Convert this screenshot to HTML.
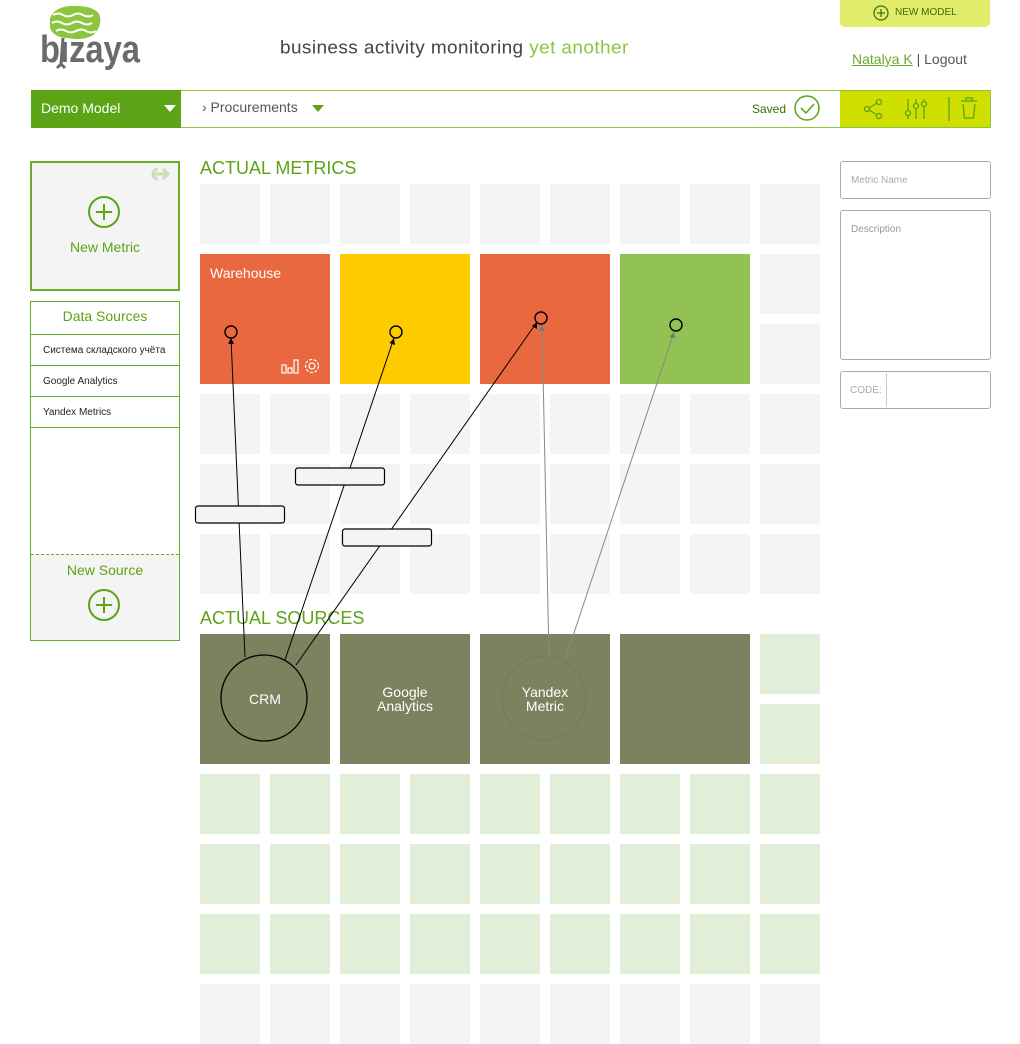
<!DOCTYPE html>
<html><head><meta charset="utf-8"><style>
*{margin:0;padding:0;box-sizing:border-box}
body{width:1020px;height:1020px;overflow:hidden;background:#fff;font-family:"Liberation Sans",sans-serif;position:relative}
.a{position:absolute}
.g{position:absolute;width:60px;height:60px;background:#f4f4f4}
.l{position:absolute;width:60px;height:60px;background:#e1efd9}
.big{position:absolute;width:130px;height:130px}
.src{position:absolute;width:130px;height:130px;background:#7d8160;color:#fff;font-size:14px;line-height:14px;text-align:center;display:flex;align-items:center;justify-content:center}
.h{position:absolute;color:#5ca316;font-size:18px}
.ds{position:absolute;left:31px;width:148px;border-bottom:1px solid #6aab2a;font-size:10px;color:#222;padding-left:12px}
</style></head><body>
<!-- logo -->
<svg class="a" style="left:38px;top:4px" width="106" height="66" viewBox="0 0 106 66">
<path d="M12 14 Q18 1 38 2 Q58 2 62 12 Q64 24 54 32 Q42 37 30 34 Q16 34 12 24 Z" fill="#8cc63f"/>
<path d="M15 11 q5 -3 10 0 t10 0 t10 0 t10 0 M14 19 q5 -3 10 0 t10 0 t10 0 t10 0 M18 27 q5 -3 10 0 t10 0 t10 0 t10 0" stroke="#fff" stroke-width="2" fill="none"/>
<path d="M25 34 L23 60 M23 60 l-4 4 M23 60 l4 4" stroke="#6b6b6b" stroke-width="3" fill="none"/>
<text x="2" y="58" font-family="Liberation Sans" font-weight="bold" font-size="38" fill="#6b6b6b" textLength="100" lengthAdjust="spacingAndGlyphs">bızaya</text>
</svg>
<div class="a" style="left:280px;top:38px;font-size:19px;color:#444;letter-spacing:0.4px;font-weight:300;transform:scaleY(0.95)">business activity monitoring <span style="color:#8cc63f">yet another</span></div>
<div class="a" style="left:840px;top:0;width:150px;height:27px;background:#e0ec6a;border-radius:0 0 5px 5px;font-size:10px;color:#3d6b10;line-height:26px;">
<svg class="a" style="left:33px;top:5px" width="16" height="16"><circle cx="8" cy="8" r="7" fill="none" stroke="#3d6b10" stroke-width="1.2"/><path d="M8 4v8M4 8h8" stroke="#3d6b10" stroke-width="1.2"/></svg><span style="margin-left:55px">NEW MODEL</span></div>
<div class="a" style="left:852px;top:51px;font-size:14px;color:#555"><span style="color:#6aab2a;text-decoration:underline">Natalya K</span> | Logout</div>
<!-- bar -->
<div class="a" style="left:31px;top:90px;width:960px;height:38px;border:1px solid #8cc63f"></div>
<div class="a" style="left:31px;top:90px;width:150px;height:38px;background:#5ca316;color:#fff;font-size:14px;line-height:36px;padding-left:10px">Demo Model
<span class="a" style="left:133px;top:15px;border:6px solid transparent;border-top:7px solid #fff;border-bottom:0"></span></div>
<div class="a" style="left:202px;top:99px;font-size:14px;color:#555">› Procurements</div>
<span class="a" style="left:312px;top:105px;border:6px solid transparent;border-top:7px solid #5ca316;border-bottom:0"></span>
<div class="a" style="left:752px;top:102px;font-size:12px;color:#3d6b10">Saved</div>
<svg class="a" style="left:794px;top:95px" width="28" height="28"><circle cx="13" cy="13" r="12" fill="none" stroke="#5ca316" stroke-width="1.5"/><path d="M7 13l5 5 8-9" stroke="#5ca316" stroke-width="1.5" fill="none"/></svg>
<div class="a" style="left:840px;top:91px;width:150px;height:36px;background:#cfdf00"></div>
<svg class="a" style="left:840px;top:91px" width="150" height="36">
<g stroke="#5ca316" stroke-width="1.3" fill="none">
<circle cx="27" cy="18" r="2.5"/><circle cx="39" cy="11" r="2.5"/><circle cx="39" cy="25" r="2.5"/><path d="M29 17l8-5M29 19l8 5"/>
<path d="M68 8v20M76 8v20M84 8v20"/><circle cx="68" cy="22" r="2.5" fill="#cfdf00"/><circle cx="76" cy="15" r="2.5" fill="#cfdf00"/><circle cx="84" cy="13" r="2.5" fill="#cfdf00"/>
<path d="M109 6v24"/><path d="M121 10h16M126 10v-3h6v3M123 13l1.5 14h9l1.5-14"/>
</g></svg>
<!-- left panel -->
<div class="a" style="left:30px;top:161px;width:150px;height:130px;background:#f4f4f4;border:2px solid #6aab2a"></div>
<svg class="a" style="left:150px;top:166px" width="24" height="16"><path d="M3 8h14M13 3l5 5-5 5M8 3a5 5 0 0 0 0 10" stroke="#c8dfbb" stroke-width="3" fill="none"/></svg>
<svg class="a" style="left:88px;top:196px" width="34" height="34"><circle cx="16" cy="16" r="15" fill="none" stroke="#5ca316" stroke-width="2"/><path d="M16 8v16M8 16h16" stroke="#5ca316" stroke-width="2"/></svg>
<div class="a" style="left:30px;top:239px;width:150px;text-align:center;color:#5ca316;font-size:14px">New Metric</div>
<div class="a" style="left:30px;top:301px;width:150px;height:340px;border:1px solid #6aab2a"></div>
<div class="a" style="left:31px;top:302px;width:148px;height:33px;border-bottom:1px solid #6aab2a;text-align:center;color:#5ca316;font-size:14px;line-height:28px">Data Sources</div>
<div class="ds" style="top:335px;height:31px;line-height:31px">Система складского учёта</div>
<div class="ds" style="top:366px;height:31px;line-height:32px">Google Analytics</div>
<div class="ds" style="top:397px;height:31px;line-height:31px">Yandex Metrics</div>
<div class="a" style="left:31px;top:554px;width:148px;height:86px;background:#f4f4f4;border-top:1px dashed #6aab2a"></div>
<div class="a" style="left:30px;top:562px;width:150px;text-align:center;color:#5ca316;font-size:14px">New Source</div>
<svg class="a" style="left:88px;top:589px" width="34" height="34"><circle cx="16" cy="16" r="15" fill="none" stroke="#5ca316" stroke-width="2"/><path d="M16 8v16M8 16h16" stroke="#5ca316" stroke-width="2"/></svg>
<!-- headers -->
<div class="h" style="left:200px;top:158px">ACTUAL METRICS</div>
<!-- gray tiles -->
<div class="g" style="left:200px;top:184px"></div><div class="g" style="left:270px;top:184px"></div><div class="g" style="left:340px;top:184px"></div><div class="g" style="left:410px;top:184px"></div><div class="g" style="left:480px;top:184px"></div><div class="g" style="left:550px;top:184px"></div><div class="g" style="left:620px;top:184px"></div><div class="g" style="left:690px;top:184px"></div><div class="g" style="left:760px;top:184px"></div>
<div class="g" style="left:760px;top:254px"></div><div class="g" style="left:760px;top:324px"></div>
<div class="g" style="left:200px;top:394px"></div><div class="g" style="left:270px;top:394px"></div><div class="g" style="left:340px;top:394px"></div><div class="g" style="left:410px;top:394px"></div><div class="g" style="left:480px;top:394px"></div><div class="g" style="left:550px;top:394px"></div><div class="g" style="left:620px;top:394px"></div><div class="g" style="left:690px;top:394px"></div><div class="g" style="left:760px;top:394px"></div>
<div class="g" style="left:200px;top:464px"></div><div class="g" style="left:270px;top:464px"></div><div class="g" style="left:340px;top:464px"></div><div class="g" style="left:410px;top:464px"></div><div class="g" style="left:480px;top:464px"></div><div class="g" style="left:550px;top:464px"></div><div class="g" style="left:620px;top:464px"></div><div class="g" style="left:690px;top:464px"></div><div class="g" style="left:760px;top:464px"></div>
<div class="g" style="left:200px;top:534px"></div><div class="g" style="left:270px;top:534px"></div><div class="g" style="left:340px;top:534px"></div><div class="g" style="left:410px;top:534px"></div><div class="g" style="left:480px;top:534px"></div><div class="g" style="left:550px;top:534px"></div><div class="g" style="left:620px;top:534px"></div><div class="g" style="left:690px;top:534px"></div><div class="g" style="left:760px;top:534px"></div>
<div class="big" style="left:200px;top:254px;background:#e9683f"><div class="a" style="left:10px;top:11px;color:#fff;font-size:14px">Warehouse</div>
<svg class="a" style="left:80px;top:102px" width="44" height="20"><g stroke="#fff" stroke-width="1.2" fill="none"><rect x="2" y="9" width="4" height="8"/><rect x="8" y="12" width="4" height="5"/><rect x="14" y="4" width="4" height="13"/><circle cx="32" cy="10" r="3"/><circle cx="32" cy="10" r="6.5" stroke-dasharray="3 1.6"/></g></svg></div>
<div class="big" style="left:340px;top:254px;background:#fccb00"></div>
<div class="big" style="left:480px;top:254px;background:#e9683f"></div>
<div class="big" style="left:620px;top:254px;background:#92c154"></div>
<!-- sources -->
<div class="src" style="left:200px;top:634px">CRM</div>
<div class="src" style="left:340px;top:634px">Google<br>Analytics</div>
<div class="src" style="left:480px;top:634px">Yandex<br>Metric</div>
<div class="src" style="left:620px;top:634px"></div>
<div class="l" style="left:760px;top:634px"></div><div class="l" style="left:760px;top:704px"></div>
<div class="l" style="left:200px;top:774px"></div><div class="l" style="left:270px;top:774px"></div><div class="l" style="left:340px;top:774px"></div><div class="l" style="left:410px;top:774px"></div><div class="l" style="left:480px;top:774px"></div><div class="l" style="left:550px;top:774px"></div><div class="l" style="left:620px;top:774px"></div><div class="l" style="left:690px;top:774px"></div><div class="l" style="left:760px;top:774px"></div>
<div class="l" style="left:200px;top:844px"></div><div class="l" style="left:270px;top:844px"></div><div class="l" style="left:340px;top:844px"></div><div class="l" style="left:410px;top:844px"></div><div class="l" style="left:480px;top:844px"></div><div class="l" style="left:550px;top:844px"></div><div class="l" style="left:620px;top:844px"></div><div class="l" style="left:690px;top:844px"></div><div class="l" style="left:760px;top:844px"></div>
<div class="l" style="left:200px;top:914px"></div><div class="l" style="left:270px;top:914px"></div><div class="l" style="left:340px;top:914px"></div><div class="l" style="left:410px;top:914px"></div><div class="l" style="left:480px;top:914px"></div><div class="l" style="left:550px;top:914px"></div><div class="l" style="left:620px;top:914px"></div><div class="l" style="left:690px;top:914px"></div><div class="l" style="left:760px;top:914px"></div>
<div class="g" style="left:200px;top:984px"></div><div class="g" style="left:270px;top:984px"></div><div class="g" style="left:340px;top:984px"></div><div class="g" style="left:410px;top:984px"></div><div class="g" style="left:480px;top:984px"></div><div class="g" style="left:550px;top:984px"></div><div class="g" style="left:620px;top:984px"></div><div class="g" style="left:690px;top:984px"></div><div class="g" style="left:760px;top:984px"></div>
<div class="h" style="left:200px;top:608px">ACTUAL SOURCES</div>
<!-- connectors -->
<svg class="a" style="left:0;top:0" width="1020" height="1020">
<g fill="none">
<circle cx="264" cy="698" r="43" stroke="#000" stroke-width="1.3"/>
<circle cx="544" cy="698" r="42" stroke="#747858" stroke-width="1"/>
<g stroke="#000" stroke-width="1">
<path d="M245 657L231 338M285 660L394 338M296 665L537 322"/>
<circle cx="231" cy="332" r="6" stroke-width="1.4"/><circle cx="396" cy="332" r="6" stroke-width="1.4"/><circle cx="541" cy="318" r="6" stroke-width="1.4"/><circle cx="676" cy="325" r="6" stroke-width="1.4"/>
</g>
<g stroke="#888" stroke-width="1"><path d="M549 657L542 325M565 660L674 332"/></g>
</g>
<g fill="#000"><path d="M231 338l-3 6h6z"/><path d="M394 338l-4.5 5 5.5 2z"/><path d="M537 322l-5 4 5 3z"/></g>
<g fill="#777"><path d="M542 325l-3 6h6z"/><path d="M674 332l-4.5 5 5.5 1.5z"/></g>
<g fill="#f4f4f4" stroke="#000" stroke-width="1.2">
<rect x="195.5" y="506" width="89" height="17" rx="2.5"/>
<rect x="295.5" y="468" width="89" height="17" rx="2.5"/>
<rect x="342.5" y="529" width="89" height="17" rx="2.5"/>
</g>
</svg>
<!-- right form -->
<div class="a" style="left:840px;top:161px;width:151px;height:38px;border:1px solid #aaa;border-radius:3px;font-size:10px;color:#aaa;padding:13px 0 0 10px">Metric Name</div>
<div class="a" style="left:840px;top:210px;width:151px;height:150px;border:1px solid #aaa;border-radius:3px;font-size:10px;color:#999;padding:13px 0 0 10px">Description</div>
<div class="a" style="left:840px;top:371px;width:151px;height:38px;border:1px solid #aaa;border-radius:3px;font-size:10px;color:#aaa;padding:13px 0 0 9px">CODE:</div>
<div class="a" style="left:886px;top:373px;width:1px;height:34px;background:#ccc"></div>
</body></html>
